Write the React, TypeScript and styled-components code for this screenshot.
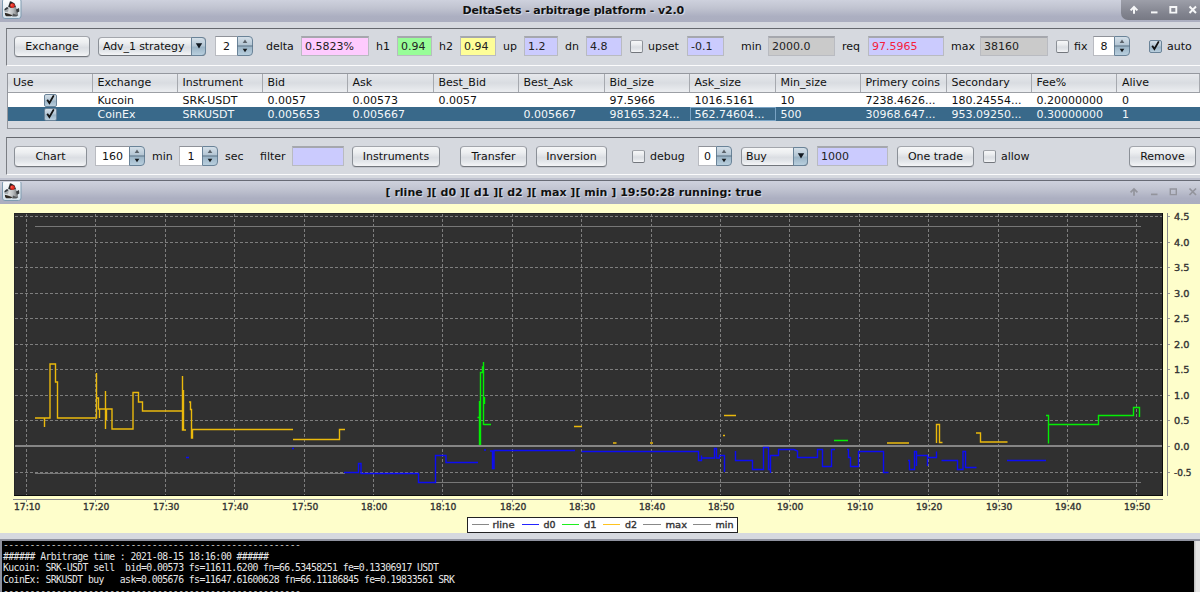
import styled, { createGlobalStyle, css } from 'styled-components'

const columns = [
  { title: 'Use', width: 84.5 },
  { title: 'Exchange', width: 85 },
  { title: 'Instrument', width: 85 },
  { title: 'Bid', width: 85 },
  { title: 'Ask', width: 86 },
  { title: 'Best_Bid', width: 85 },
  { title: 'Best_Ask', width: 86 },
  { title: 'Bid_size', width: 85 },
  { title: 'Ask_size', width: 86 },
  { title: 'Min_size', width: 85 },
  { title: 'Primery coins', width: 86 },
  { title: 'Secondary', width: 85 },
  { title: 'Fee%', width: 85.5 },
  { title: 'Alive', width: 83 },
]

const rows = [
  ['Kucoin', 'SRK-USDT', '0.0057', '0.00573', '0.0057', '', '97.5966', '1016.5161', '10', '7238.4626...', '180.24554...', '0.20000000', '0'],
  ['CoinEx', 'SRKUSDT', '0.005653', '0.005667', '', '0.005667', '98165.324...', '562.74604...', '500', '30968.647...', '953.09250...', '0.30000000', '1'],
]

const selectedRow = 1
const focusedColumn = 7

const times = [
  '17:10', '17:20', '17:30', '17:40', '17:50', '18:00', '18:10', '18:20', '18:30',
  '18:40', '18:50', '19:00', '19:10', '19:20', '19:30', '19:40', '19:50',
]
const values = ['4.5', '4.0', '3.5', '3.0', '2.5', '2.0', '1.5', '1.0', '0.5', '0.0', '-0.5']

const timeX = (i: number) => Math.round(26 + i * 69.4) + 0.5
const valueY = (i: number) => Math.round(216 + i * 25.55) + 0.5

const d2Path =
  'M35 418H50V364H55.5V382H57.5V418H96.5V373M44.5 418V427M96.5 398H98.5V409H112V429H133V392.5H138.5V402H142.5V411H182.5V376V430H186M183.5 390V430M99.5 409V418M105.5 391V429M106.5 409V420M189 402H190.5V409.5H191.5V438H192.5V429.5H293M293 439.5H339.5V429.5H345M574 426.5H582M613 443H616.5M650 443H653M724 415.5H736M723 435.5H725M887 443H909M936.5 443V424.5H939.5V442.5H942.5M976 433H980.5V442H1007.5M977 433H980'

const d0Path =
  'M186 457.5H189M292 448.5H294M344 472.5H358.5V463.5H361V473.5H418.5V482.5H435.5V455.5H446V462.5H478M484 450H486M490 451H492.5V468.5H494V450.5H575M581.5 451.5H698.5V460.5H701.5V455.5V458H714.5V448.5H716.5V458H719.5V455.5H724.5V472M735.5 451V460.5H752.5V469.5H763.5V447.5H768.5V469.5H770.5V473V455.5H778.5V449.5H794L797.5 451V457.5H817.5V449.5H822.5V466.5H831.5V449.5H835M847 449.5H848.5V457.5H850.5V466.5H858.5V451.5H883.5V472.5H888.5M908 460.5H909.5V469.5H914.5V451.5H916.5V466V455.5H927.5V466V457.5H936.5V451.5M941.5 460.5H957.5V469.5H963V451.5H965.5V467.5H976.5M1007 460.5H1046'

const d1Path =
  'M477.5 417.5H479.5M479.5 401V445M480.5 445V372.5H482.5V367H483.5V362V425M484.5 397V404M483.5 424.5H491M834 440.5H848M1046 415.5H1048.5V443.5M1049 424.5H1098.5V415.5H1133.5V407.5H1139.5V417'

const legend = [
  { label: 'rline', line: 471.5, text: 492.5, width: 22, color: '#888' },
  { label: 'd0', line: 521.5, text: 543.5, width: 12, color: '#2424ff' },
  { label: 'd1', line: 561.5, text: 584, width: 12.5, color: '#1fef1f' },
  { label: 'd2', line: 602.5, text: 625, width: 12, color: '#fec320' },
  { label: 'max', line: 643, text: 665.5, width: 21.5, color: '#888' },
  { label: 'min', line: 693, text: 715.5, width: 18, color: '#888' },
]

const dashes = '-'.repeat(56)
const log = [
  dashes,
  '###### Arbitrage time : 2021-08-15 18:16:00 ######',
  'Kucoin: SRK-USDT sell  bid=0.00573 fs=11611.6200 fn=66.53458251 fe=0.13306917 USDT',
  'CoinEx: SRKUSDT buy   ask=0.005676 fs=11647.61600628 fn=66.11186845 fe=0.19833561 SRK',
  dashes,
]

const DukeIcon = () => (
  <Duke viewBox="0 0 20 19">
    <defs>
      <linearGradient id="duke" x1="0" y1="0" x2="0" y2="1">
        <stop offset="0" stopColor="#fdfefe" />
        <stop offset="1" stopColor="#d3e0ea" />
      </linearGradient>
      <linearGradient id="dukeBody" x1="0" y1="0" x2="1" y2="0">
        <stop offset="0" stopColor="#f4f5f5" />
        <stop offset="0.6" stopColor="#b9bcbe" />
        <stop offset="1" stopColor="#6c6f71" />
      </linearGradient>
    </defs>
    <rect x="0.5" y="-1.5" width="18.5" height="20" rx="2.5" fill="url(#duke)" stroke="#7e9bb0" />
    <path d="M3.5 15.5C4.5 11 7 8 8.5 5L14 7C15 10 15.5 12 16.2 15.8Z" fill="url(#dukeBody)" />
    <path d="M8 1.2L6.2 6.8L9 8L14 7L12.6 3.4L9.8 1.8Z" fill="#26282a" />
    <path d="M1.8 10L5 7.2L7 8L6 12.2L3 12Z" fill="#a8aeb2" />
    <path d="M2.2 9.2L4.6 7.2L6.4 7.6L5.8 8.8L3.4 10.2Z" fill="#32373b" />
    <path d="M14 9.5L17 8L17.4 11.5L15 12.8Z" fill="#3a3d40" />
    <path d="M2.8 12.8L5.8 13.6L10.6 15.2L9 16.3H4.4L3.2 15.2Z" fill="#2e2923" />
    <path d="M11 13.5L15.8 15.4L14.4 16.4H10.2Z" fill="#55585a" />
    <circle cx="10.4" cy="5.6" r="2.4" fill="#e42a20" />
    <circle cx="9.8" cy="5" r="0.8" fill="#ff8069" />
  </Duke>
)

const WindowControls = ({ active = false }: { active?: boolean }) => (
  <Controls $active={active}>
    <svg width="79" height="20" viewBox="0 0 79 20" fill="none" stroke={active ? '#f6f7f8' : '#93949c'} strokeWidth={active ? 2 : 1.7}>
      <path d="M13 13.8V7.5M9.6 10.4L13 7L16.4 10.4" />
      <path d="M30 12.4H36.5" />
      <path d="M49.3 7H55.3V12.6H49.3Z" strokeWidth={active ? 1.9 : 1.4} />
      <path d="M68.5 6.5L75 13M75 6.5L68.5 13" />
    </svg>
  </Controls>
)

const CheckBox = ({ checked = false, ml = 0 }: { checked?: boolean; ml?: number }) => (
  <Check $checked={checked} $ml={ml}>
    {checked && (
      <svg width="13" height="13" viewBox="0 0 13 13">
        <path d="M3.2 5.8L5.4 9L9.8 1.4" fill="none" stroke="#111" strokeWidth="1.8" />
      </svg>
    )}
  </Check>
)

const Spinner = ({ value, width, ml }: { value: string; width: number; ml: number }) => (
  <SpinnerBox $w={width} $ml={ml}>
    <SpinnerValue>{value}</SpinnerValue>
    <SpinnerArrows>
      <svg width="16" height="20" viewBox="0 0 16 20">
        <path d="M8 3.6L10.3 7H5.7Z" fill="#5a626a" />
        <path d="M0 10H16" stroke="#5b7285" />
        <path d="M8 16.3L10.3 12.7H5.7Z" fill="#14181c" />
      </svg>
    </SpinnerArrows>
  </SpinnerBox>
)

const Combo = ({ value, width, ml }: { value: string; width: number; ml: number }) => (
  <ComboBox $w={width} $ml={ml}>
    <span>{value}</span>
    <ComboArrow>
      <svg width="8" height="6" viewBox="0 0 8 6">
        <path d="M0.8 0.3H7.2L4 5.6Z" fill="#111820" />
      </svg>
    </ComboArrow>
  </ComboBox>
)

const Chart = () => (
  <ChartSvg viewBox="0 204 1200 329">
    <g shapeRendering="crispEdges" fill="none">
      <rect x="14" y="213" width="1149" height="283" fill="#303030" />
      <path d="M14.5 496V213.5H1163" stroke="#262626" />
      <path d="M14 495.5H1162.5V213" stroke="#0c0c0c" />
      <g stroke="#7e7e7e" strokeDasharray="3 2">
        {times.map((time, i) => (
          <path key={time} d={`M${timeX(i)} 214V495`} />
        ))}
        {values.map((value, i) => (
          <path key={value} d={`M15 ${valueY(i)}H1162`} />
        ))}
      </g>
      <path d="M15 446H1162" stroke="#858585" strokeWidth="2" />
      <path d="M35 226.5H1141M35 473.5H345M435 482.5H1141" stroke="#777" />
    </g>
    <g fill="none" strokeWidth="1.4">
      <path d={d2Path} stroke="#eab90c" />
      <path d={d0Path} stroke="#0c0cf6" />
      <path d={d1Path} stroke="#04ee04" />
    </g>
    <g shapeRendering="crispEdges" fill="none">
      <path d="M13 499.5H1163M1167.5 213V496" stroke="#888" />
      <g stroke="#999">
        {times.map((time, i) => (
          <path key={time} d={`M${timeX(i)} 500V502`} />
        ))}
        {values.map((value, i) => (
          <path key={value} d={`M1168 ${valueY(i)}H1170`} />
        ))}
      </g>
      <rect x="467.5" y="517.5" width="270" height="15" fill="#fff" stroke="#222" />
      {legend.map(({ label, line, color }) => (
        <path key={label} d={`M${line} 524.5H${line + 17.5}`} stroke={color} />
      ))}
    </g>
    <g fontSize="9" fill="#333" stroke="#333" strokeWidth="0.35">
      {times.map((time, i) => (
        <text key={time} x={timeX(i) + 0.7} y="510" textAnchor="middle" textLength="26.4" lengthAdjust="spacingAndGlyphs">
          {time}
        </text>
      ))}
      {values.map((value, i) => (
        <text
          key={value}
          x="1174"
          y={valueY(i) + 3}
          textLength={value.length === 4 ? 17.5 : 15.5}
          lengthAdjust="spacingAndGlyphs"
        >
          {value}
        </text>
      ))}
      {legend.map(({ label, text, width }) => (
        <text key={label} x={text} y="527.5" textLength={width} lengthAdjust="spacingAndGlyphs">
          {label}
        </text>
      ))}
    </g>
  </ChartSvg>
)

const App = () => (
  <Desktop>
    <GlobalStyle />
    <TitleBar>
      <DukeIcon />
      <Title $w={222} $tight>DeltaSets - arbitrage platform - v2.0</Title>
      <WindowControls active />
    </TitleBar>

    <Main>
      <Toolbar $raise={2}>
        <Button $w={76} $ml={7}>Exchange</Button>
        <Combo value="Adv_1 strategy" width={108} ml={8} />
        <Spinner value="2" width={38} ml={9} />
        <Label $w={35} $ml={13}>delta</Label>
        <Field $w={68} $bg="#fecbfe">0.5823%</Field>
        <Label $w={21} $ml={7}>h1</Label>
        <Field $w={35} $bg="#98fd98">0.94</Field>
        <Label $w={21} $ml={7}>h2</Label>
        <Field $w={36} $bg="#fefe98">0.94</Field>
        <Label $w={21} $ml={7}>up</Label>
        <Field $w={34} $bg="#cbcbfe">1.2</Field>
        <Label $w={21} $ml={7}>dn</Label>
        <Field $w={36} $bg="#cbcbfe">4.8</Field>
        <CheckBox ml={8} />
        <Label $w={39} $ml={5}>upset</Label>
        <Field $w={37} $bg="#cbcbfe">-0.1</Field>
        <Label $w={27} $ml={17}>min</Label>
        <Field $w={67} $bg="#cacaca">2000.0</Field>
        <Label $w={26} $ml={7}>req</Label>
        <Field $w={76} $bg="#cbcbfe" $color="#f5203c">97.5965</Field>
        <Label $w={29} $ml={7}>max</Label>
        <Field $w={68} $bg="#cacaca">38160</Field>
        <CheckBox ml={8} />
        <Label $w={19} $ml={5}>fix</Label>
        <Spinner value="8" width={37} ml={0} />
        <CheckBox checked ml={19} />
        <Label $w={30} $ml={5}>auto</Label>
      </Toolbar>

      <Table>
        <HeaderRow>
          {columns.map(({ title, width }) => (
            <HeaderCell key={title} $w={width}>{title}</HeaderCell>
          ))}
        </HeaderRow>
        {rows.map((row, rowIndex) => (
          <Row key={row[0]} $selected={rowIndex === selectedRow}>
            <UseCell $w={columns[0].width}>
              <CheckBox checked />
            </UseCell>
            {row.map((value, i) => (
              <Cell
                key={columns[i + 1].title}
                $w={columns[i + 1].width}
                $focused={rowIndex === selectedRow && i === focusedColumn}
              >
                {value}
              </Cell>
            ))}
          </Row>
        ))}
      </Table>

      <Toolbar>
        <Button $w={73} $ml={7}>Chart</Button>
        <Spinner value="160" width={50} ml={8} />
        <Label $w={27} $ml={7}>min</Label>
        <Spinner value="1" width={39} ml={0} />
        <Label $w={27} $ml={7}>sec</Label>
        <Label $w={32} $ml={8}>filter</Label>
        <Field $w={52} $bg="#cbcbfe" />
        <Button $w={88} $ml={8}>Instruments</Button>
        <Button $w={67} $ml={20}>Transfer</Button>
        <Button $w={71} $ml={9}>Inversion</Button>
        <CheckBox ml={25} />
        <Label $w={48} $ml={5}>debug</Label>
        <Spinner value="0" width={34} ml={0} />
        <Combo value="Buy" width={67} ml={9} />
        <Field $w={71} $bg="#cbcbfe" $ml={9}>1000</Field>
        <Button $w={77} $ml={9}>One trade</Button>
        <CheckBox ml={9} />
        <Label $w={128} $ml={5}>allow</Label>
        <Button $w={67}>Remove</Button>
      </Toolbar>
    </Main>

    <TitleBar $inactive>
      <DukeIcon />
      <Title $w={376}>[ rline ][ d0 ][ d1 ][ d2 ][ max ][ min ] 19:50:28 running: true</Title>
      <WindowControls />
    </TitleBar>
    <Chart />
    <Splitter />
    <Console>
      <Log>
        {log.map((line, i) => (
          <LogLine key={i} $rule={line === dashes}>{line}</LogLine>
        ))}
      </Log>
      <ScrollTrack />
    </Console>
  </Desktop>
)

const GlobalStyle = createGlobalStyle`
  * {
    box-sizing: border-box;
  }

  body {
    margin: 0;
    overflow: hidden;
    font-family: 'DejaVu Sans', sans-serif;
    font-size: 11px;
    color: #111;
  }
`

const raised = css`
  border: 1px solid #8b9097;
  border-top-color: #a3a6ac;
  border-bottom-color: #72767c;
  background: linear-gradient(#f6f7f8 0%, #eceef0 30%, #dbdee3 55%, #e2e5e9 75%, #f4f5f7 100%);
`

const blueArrow = css`
  border: 1px solid #6a8398;
  background: linear-gradient(#d4dfe8 0%, #b4c6d4 45%, #9bb4c6 55%, #b9cfde 100%);
`

const sized = css<{ $w: number; $ml?: number }>`
  flex: none;
  width: ${({ $w }) => $w}px;
  margin-left: ${({ $ml = 0 }) => $ml}px;
`

const Desktop = styled.div`
  display: flex;
  flex-direction: column;
  width: 1200px;
  height: 592px;
  overflow: hidden;
  background: #d6d9df;
`

const TitleBar = styled.header<{ $inactive?: boolean }>`
  display: grid;
  grid-template-columns: 79px 1fr 79px;
  flex: none;
  align-items: start;
  height: ${({ $inactive }) => ($inactive ? 24 : 22)}px;
  padding-top: ${({ $inactive }) => ($inactive ? 1 : 0)}px;
  border-top: ${({ $inactive }) => ($inactive ? '1px solid #686b75' : '0')};
  background: linear-gradient(#ced1dd 0%, #c1c4d1 35%, #acafc1 75%, #abaec0 100%);
`

const Duke = styled.svg`
  width: 20px;
  height: 19px;
  margin-left: 2px;
`

const Title = styled.h1<{ $w: number; $tight?: boolean }>`
  justify-self: center;
  width: ${({ $w }) => $w}px;
  margin: 0 0 0 -53px;
  line-height: 22px;
  font-size: 11px;
  font-weight: bold;
  letter-spacing: ${({ $tight }) => ($tight ? '-0.14px' : '0.015px')};
  white-space: nowrap;
  text-shadow: 1px 1px 1px #dfe1e8;
`

const Controls = styled.div<{ $active: boolean }>`
  height: 20px;
  border-bottom-left-radius: 7px;
  background: ${({ $active }) => ($active ? 'linear-gradient(#9d9fa9, #80828d 70%, #777984)' : 'none')};

  svg {
    display: block;
  }
`

const Main = styled.main`
  display: flex;
  flex: none;
  flex-direction: column;
  height: 158px;
  padding: 6px 0 0 6px;
  border-bottom: 2px solid #bfc2cf;
`

const Toolbar = styled.div<{ $raise?: number }>`
  display: flex;
  flex: none;
  align-items: center;
  height: 38px;
  padding-bottom: ${({ $raise = 0 }) => $raise}px;
  border-top: 1px solid #65686e;
  border-left: 1px solid #7b7e84;
  border-bottom: 1px solid #fbfbfc;
`

const Button = styled.button<{ $w: number; $ml?: number }>`
  ${sized}
  ${raised}
  height: 21px;
  padding: 0;
  border-radius: 4px;
  color: #111;
  font: inherit;
  white-space: nowrap;
  box-shadow: 0 1px 0 #c3c6cd;
`

const Label = styled.span<{ $w: number; $ml?: number }>`
  ${sized}
  white-space: nowrap;
`

const Field = styled.div<{ $w: number; $ml?: number; $bg: string; $color?: string }>`
  ${sized}
  height: 20px;
  padding-left: 3px;
  border: 1px solid #b9bbc1;
  border-top: 2px solid #a5a7ad;
  background: ${({ $bg }) => $bg};
  color: ${({ $color = '#222' }) => $color};
  line-height: 17px;
`

const Check = styled.span<{ $checked: boolean; $ml: number }>`
  ${raised}
  flex: none;
  width: 13px;
  height: 13px;
  margin-left: ${({ $ml }) => $ml}px;
  border-radius: 2px;
  ${({ $checked }) => $checked && blueArrow}

  svg {
    display: block;
    margin: -1px;
    overflow: visible;
  }
`

const SpinnerBox = styled.div<{ $w: number; $ml: number }>`
  ${sized}
  display: flex;
  height: 20px;
`

const SpinnerValue = styled.span`
  flex: 1;
  border: 1px solid #b9bbc1;
  border-top-color: #8f9299;
  border-right: 0;
  background: #fff;
  line-height: 19px;
  text-align: center;
`

const SpinnerArrows = styled.span`
  ${blueArrow}
  width: 16px;
  border-radius: 0 4px 4px 0;

  svg {
    display: block;
    margin: -1px;
  }
`

const ComboBox = styled.div<{ $w: number; $ml: number }>`
  ${sized}
  ${raised}
  display: flex;
  align-items: center;
  justify-content: space-between;
  height: 19px;
  padding-left: 4px;
  border-radius: 4px;
  letter-spacing: -0.1px;
  white-space: nowrap;
`

const ComboArrow = styled.span`
  ${blueArrow}
  display: flex;
  align-items: center;
  justify-content: center;
  width: 15px;
  height: 19px;
  margin: -1px;
  border-radius: 0 4px 4px 0;
`

const Table = styled.div`
  flex: none;
  height: 56px;
  margin: 7px 0 8px 1px;
  border: 1px solid #94979e;
  border-right: 0;
`

const HeaderRow = styled.div`
  display: flex;
  height: 19px;
  border-bottom: 1px solid #9c9fa5;
  background: linear-gradient(#e6e8ec, #d9dce1 50%, #eceef1);
`

const HeaderCell = styled.div<{ $w: number }>`
  ${sized}
  padding-left: 5px;
  border-right: 1px solid #a6a9af;
  line-height: 17px;
`

const Row = styled.div<{ $selected: boolean }>`
  display: flex;
  height: 14px;
  background: ${({ $selected }) => ($selected ? '#39698a' : '#fff')};
  color: ${({ $selected }) => ($selected ? '#f4f7f9' : '#111')};
`

const Cell = styled.div<{ $w: number; $focused: boolean }>`
  ${sized}
  padding-left: 5px;
  line-height: 15px;
  box-shadow: ${({ $focused }) => ($focused ? 'inset 0 0 0 1px #79a3c4' : 'none')};
`

const UseCell = styled.div<{ $w: number }>`
  ${sized}
  display: flex;
  justify-content: center;
  padding-top: 1px;
`

const ChartSvg = styled.svg`
  display: block;
  flex: none;
  width: 1200px;
  height: 329px;
  background: #fefecb;
`

const Splitter = styled.div`
  flex: none;
  height: 8px;
  border-bottom: 2px solid #8f929f;
  background: #d6d9df;
`

const Console = styled.section`
  display: flex;
  flex: 1;
  min-height: 0;
  border-left: 2px solid #8f929f;
  background: #000;
  overflow: hidden;
`

const Log = styled.div`
  flex: 1;
  margin-top: -1px;
  padding-left: 1px;
  color: #e6e6e6;
  font-family: 'DejaVu Sans Mono', monospace;
  font-size: 9.8px;
  letter-spacing: -0.59px;
`

const LogLine = styled.div<{ $rule: boolean }>`
  height: 11.5px;
  color: ${({ $rule }) => ($rule ? '#bdbdbd' : 'inherit')};
  line-height: 10px;
  white-space: pre;
`

const ScrollTrack = styled.div`
  width: 6px;
  background: linear-gradient(90deg, #b9b9b9, #e4e4e4 40%);
`

export default App
